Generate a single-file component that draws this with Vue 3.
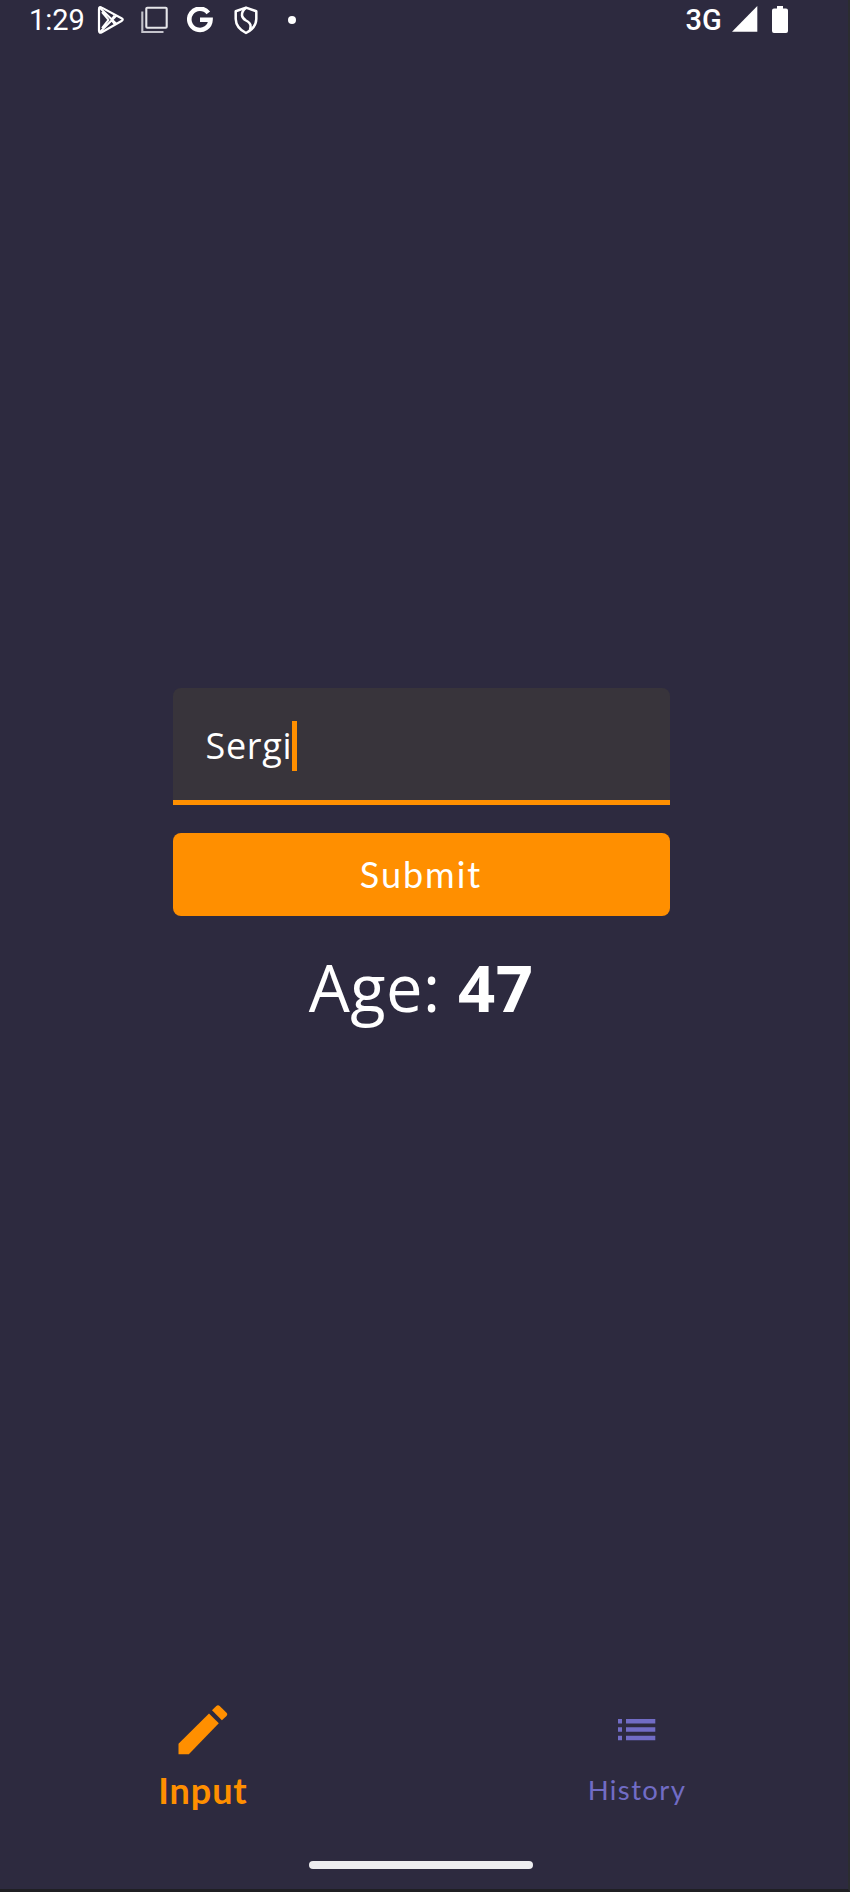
<script setup>
import { ref } from 'vue'

const name = ref('Sergi')
const age = ref(47)
</script>

<template>
  <div class="frame">
    <div class="screen">
      <header class="status">
        <span class="clock">1:29</span>
        <svg class="play" width="28" height="30" viewBox="0 0 28 30" fill="none" stroke="#fff" stroke-width="2.2" stroke-linejoin="round">
          <path d="M2 4.2Q2 1 4.800 2.600L24.500 13.200Q27 14.600 24.500 16L4.800 27.200Q2 28.600 2 25.500Z" />
          <path d="M3 3L19.500 19M3 27L19.500 10.500M5 7L11.500 14.800L5 23M17.500 10.500L14.500 14.800L17.500 19" stroke-width="2" />
        </svg>
        <svg class="copy" width="27" height="28" viewBox="0 0 27 28" fill="none" stroke="#e6e6ea" stroke-width="2.100">
          <rect x="5.300" y="1.800" width="20.400" height="20" rx="1" />
          <path d="M1.300 5.500V26H22.500" stroke="#c4c3cb" />
        </svg>
        <svg class="google" width="26" height="26" viewBox="0 0 26 26" fill="none" stroke="#fff" stroke-width="4.600">
          <path d="M21.300 5.900A10.600 10.600 0 1 0 23.500 12.800H13" />
        </svg>
        <svg class="shield" width="24" height="29" viewBox="0 0 24 29" fill="none" stroke="#fff" stroke-width="2.500" stroke-linejoin="round">
          <path d="M12 1.600L22.300 5.200V13Q22 22 12 27Q2 22 1.700 13V5.200Z" />
          <path d="M12 2Q7.600 5 8 9.500Q8.500 12.500 12 14.500Q16.800 17 16.600 20.500L16 24" />
        </svg>
        <span class="dot"></span>
        <span class="network">3G</span>
        <svg class="signal" width="26" height="26" viewBox="0 0 26 26"><path d="M25.300 0V25.700H0Z" fill="#fff" /></svg>
        <svg class="battery" width="16" height="27" viewBox="0 0 16 27"><path d="M5 0H11V2.500H14Q16 2.500 16 4.500V25Q16 27 14 27H2Q0 27 0 25V4.500Q0 2.500 2 2.500H5Z" fill="#fff" /></svg>
      </header>

      <main class="content">
        <div class="field">
          <span class="value">{{ name }}</span><span class="caret"></span>
        </div>
        <button class="submit"><span>Submit</span></button>
        <p class="result">Age: <strong>{{ age }}</strong></p>
      </main>

      <nav class="tabs">
        <div class="tab active">
          <svg width="50" height="50" viewBox="0 0 50 50" fill="#ff8f00">
            <path d="M0.500 38.700L31 8.500L40.800 18.300L10.800 49.300H0.500Z" />
            <path d="M34 5.300L38.300 1Q40 -0.600 41.700 1L48.500 7.700Q50 9.300 48.500 11L43.900 15.300Z" />
          </svg>
          <span>Input</span>
        </div>
        <div class="tab history">
          <svg width="38" height="24" viewBox="0 0 38 24" fill="#716cc5">
            <path d="M0 1H4V5.500H0ZM8 1H37.300V5.500H8ZM0 9.300H4V13.800H0ZM8 9.300H37.300V13.800H8ZM0 17.700H4V22.200H0ZM8 17.700H37.300V22.200H8Z" />
          </svg>
          <span>History</span>
        </div>
      </nav>
      <div class="gesture"></div>
    </div>
  </div>
</template>

<style>
body {
  background: #2d2a3f;
}
</style>

<style scoped>
.frame {
  box-sizing: border-box;
  width: 850px;
  height: 1892px;
  border-right: 2px solid #2b2d30;
  border-bottom: 3px solid #1f1f23;
  background: #2d2a3f;
  color: #fff;
  overflow: hidden;
}
.screen {
  display: flex;
  flex-direction: column;
  height: 1889px;
}
.status {
  box-sizing: border-box;
  display: flex;
  align-items: flex-start;
  height: 45px;
  flex: none;
  padding-left: 29px;
  font-family: Roboto, sans-serif;
  font-size: 29px;
  line-height: 40px;
}
.clock {
  width: 68px;
}
.play {
  margin-top: 5px;
}
.copy {
  margin: 6px 0 0 16px;
}
.google {
  margin: 7px 0 0 19px;
}
.shield {
  margin: 6px 0 0 21px;
}
.dot {
  width: 8px;
  height: 8px;
  margin: 16px 0 0 30px;
  border-radius: 50%;
  background: #fff;
}
.network {
  width: 46px;
  margin-left: 389.500px;
  font-weight: 500;
}
.signal {
  margin-top: 6px;
}
.battery {
  margin: 6px 0 0 14.500px;
}
.content {
  display: flex;
  flex-direction: column;
  width: 497px;
  margin: 643px 0 0 172.500px;
  font-family: "Open Sans", sans-serif;
}
.field {
  box-sizing: border-box;
  display: flex;
  align-items: center;
  height: 117px;
  padding: 4px 0 0 33px;
  border-bottom: 5px solid #ff8f00;
  border-radius: 8px 8px 0 0;
  background: #38343b;
}
.value {
  font-size: 36px;
  line-height: 50px;
  letter-spacing: 0.700px;
}
.caret {
  width: 5px;
  height: 50px;
  margin-left: -0.500px;
  background: #ff8f00;
}
.submit {
  height: 83px;
  margin: 28px 0 0;
  padding: 0;
  border: 0;
  border-radius: 8px;
  background: #ff8f00;
  color: #fff;
  font: 36px/83px Lato, sans-serif;
  letter-spacing: 2px;
}
.result {
  margin: 30px 0 0;
  font-size: 65px;
  line-height: 82px;
  letter-spacing: 0.500px;
  text-align: center;
}
.tabs {
  display: flex;
  justify-content: space-between;
  margin-top: auto;
  padding: 0 111px 0 103px;
  font-family: Lato, sans-serif;
}
.tab {
  display: flex;
  flex-direction: column;
  align-items: center;
  width: 200px;
}
.tab span {
  line-height: 40px;
}
.active {
  color: #ff8f00;
  font-size: 36px;
  font-weight: 700;
  letter-spacing: 0.900px;
}
.active span {
  margin-top: 15px;
}
.history {
  color: #716cc5;
  font-size: 27.500px;
  letter-spacing: 1.400px;
}
.history svg {
  margin-top: 13px;
}
.history span {
  margin-top: 28px;
}
.gesture {
  width: 224px;
  height: 8px;
  margin: 51px 0 20px 309px;
  border-radius: 4px;
  background: #ededf0;
}
</style>
